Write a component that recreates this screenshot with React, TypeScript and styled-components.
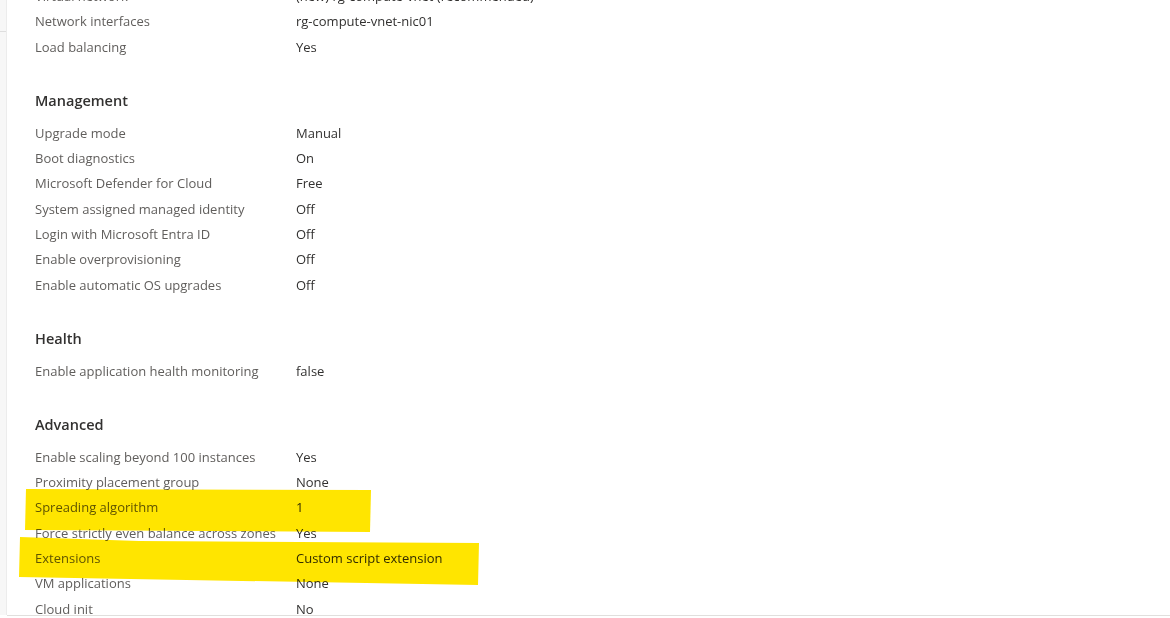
import styled, { createGlobalStyle } from 'styled-components'

const GlobalStyle = createGlobalStyle`
  html, body {
    margin: 0;
    padding: 0;
    background: #fff;
  }
  body {
    font-family: "Open Sans", Roboto, "Liberation Sans", sans-serif;
    -webkit-font-smoothing: antialiased;
  }
`

type Row = [string, string]
type Section = { title?: string; rows: Row[] }

const sections: Section[] = [
  {
    rows: [
      ['Virtual network', '(new) rg-compute-vnet (recommended)'],
      ['Network interfaces', 'rg-compute-vnet-nic01'],
      ['Load balancing', 'Yes'],
    ],
  },
  {
    title: 'Management',
    rows: [
      ['Upgrade mode', 'Manual'],
      ['Boot diagnostics', 'On'],
      ['Microsoft Defender for Cloud', 'Free'],
      ['System assigned managed identity', 'Off'],
      ['Login with Microsoft Entra ID', 'Off'],
      ['Enable overprovisioning', 'Off'],
      ['Enable automatic OS upgrades', 'Off'],
    ],
  },
  {
    title: 'Health',
    rows: [['Enable application health monitoring', 'false']],
  },
  {
    title: 'Advanced',
    rows: [
      ['Enable scaling beyond 100 instances', 'Yes'],
      ['Proximity placement group', 'None'],
      ['Spreading algorithm', '1'],
      ['Force strictly even balance across zones', 'Yes'],
      ['Extensions', 'Custom script extension'],
      ['VM applications', 'None'],
      ['Cloud init', 'No'],
    ],
  },
]

export default function App() {
  return (
    <>
      <GlobalStyle />
      <Page>
        <Rail>
          <RailDivider />
        </Rail>
        <Main>
          <Content>
            {sections.map((section, i) => (
              <SummarySection key={i} $first={!section.title}>
                {section.title && <SectionTitle>{section.title}</SectionTitle>}
                {section.rows.map(([label, value]) => (
                  <SummaryRow key={label}>
                    <Label>{label}</Label>
                    <Value>{value}</Value>
                  </SummaryRow>
                ))}
              </SummarySection>
            ))}
          </Content>
        </Main>

        {/* marker annotations drawn over the screenshot */}
        <Marker
          style={{ left: 25, top: 489, width: 346, height: 43 }}
          $shape="1px 0, 346px 1px, 345px 43px, 0 41px"
        />
        <Marker
          style={{ left: 19, top: 536, width: 460, height: 49 }}
          $shape="1px 1px, 120px 5px, 460px 7px, 459px 49px, 0 41px"
        />
      </Page>
    </>
  )
}

const Page = styled.div`
  position: relative;
  display: flex;
  width: 1170px;
  height: 618px;
  overflow: hidden;
  background: #fff;
`

const Rail = styled.div`
  flex: 0 0 6px;
  height: 615px;
  background: #f7f7f7;
  border-right: 1px solid #ececec;
`

const RailDivider = styled.div`
  margin-top: 31px;
  height: 1px;
  background: #dedede;
`

const Main = styled.main`
  flex: 1;
  height: 615px;
  overflow: hidden;
  border-bottom: 1px solid #e1dfdd;
  padding-left: 28px;
`

const Content = styled.div`
  margin-top: -16.5px;
`

const SummarySection = styled.section<{ $first?: boolean }>`
  margin-top: ${(p) => (p.$first ? '0' : '31.33px')};
`

const SectionTitle = styled.h3`
  margin: 0 0 9.33px;
  height: 20px;
  line-height: 20px;
  font-size: 14.5px;
  font-weight: 600;
  color: #323130;
`

const SummaryRow = styled.div`
  display: grid;
  grid-template-columns: 261px 1fr;
  align-items: center;
  height: 25.33px;
  font-size: 13px;
  line-height: 16px;
`

const Label = styled.div`
  color: #605e5c;
  white-space: nowrap;
`

const Value = styled.div`
  color: #323130;
  white-space: nowrap;
`

const Marker = styled.div<{ $shape: string }>`
  position: absolute;
  background: #ffe500;
  mix-blend-mode: multiply;
  clip-path: polygon(${(p) => p.$shape});
`
